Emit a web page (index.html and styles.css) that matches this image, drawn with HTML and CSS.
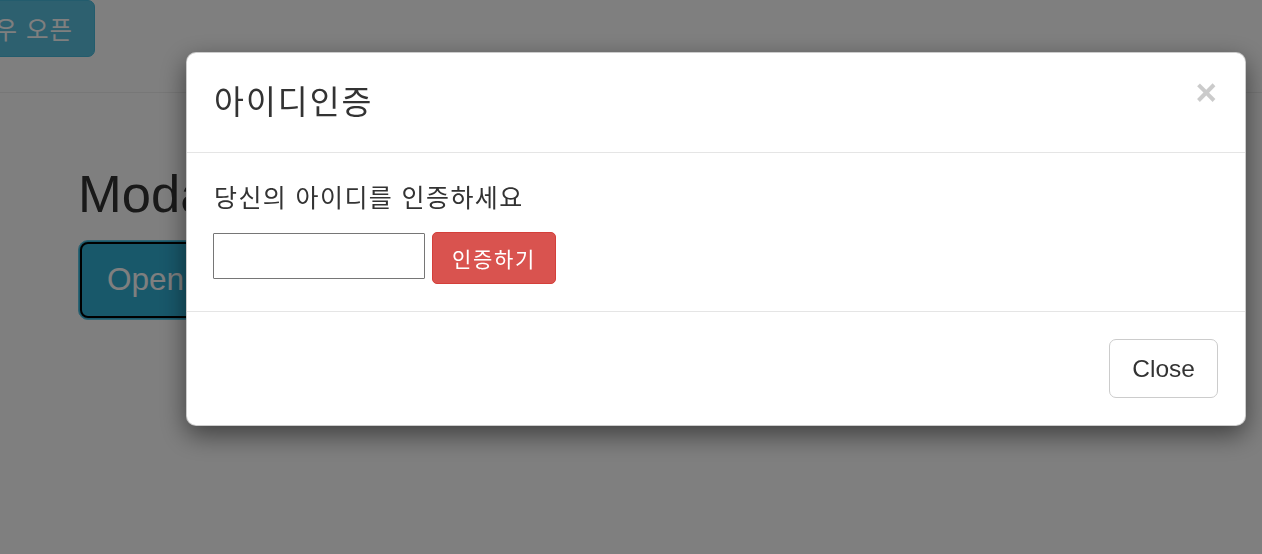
FILE: index.html
```html
<!DOCTYPE html>
<html lang="ko">
<head>
<meta charset="utf-8">
<title>Modal Example</title>
<link rel="stylesheet" href="styles.css">
</head>
<body>
<div class="topbar">
  <div class="topbar-inner">
    <button class="btn btn-info top-btn" type="button">새 윈도우 오픈</button>
  </div>
</div>
<div class="container">
  <h2 class="page-title">Modal Example</h2>
  <button class="btn btn-info btn-lg open-btn" type="button">Open Modal</button>
</div>

<div class="backdrop"></div>

<div class="modal" role="dialog">
  <div class="modal-header">
    <h4 class="modal-title">아이디인증</h4>
    <button class="close" type="button">&times;</button>
  </div>
  <div class="modal-body">
    <p class="modal-text">당신의 아이디를 인증하세요</p>
    <div class="form-row">
      <input class="id-input" type="text">
      <button class="btn btn-danger btn-sm" type="button">인증하기</button>
    </div>
  </div>
  <div class="modal-footer">
    <button class="btn btn-default close-btn" type="button">Close</button>
  </div>
</div>
</body>
</html>
```

FILE: styles.css
```css
* { box-sizing: border-box; }

html, body {
  margin: 0;
  padding: 0;
}

body {
  background: #fff;
  color: #333;
  font-family: "Liberation Sans", "Noto Sans CJK KR", sans-serif;
  overflow: hidden;
  height: 554px;
}

.btn {
  font-family: "Liberation Sans", "Noto Sans CJK KR", sans-serif;
  cursor: pointer;
  white-space: nowrap;
}

/* background page */
.topbar {
  height: 93px;
  border-bottom: 1px solid #eee;
}

.topbar-inner {
  width: 95px;
  display: flex;
  justify-content: flex-end;
}

.top-btn {
  flex-shrink: 0;
  height: 57px;
  padding: 0 21px;
  font-size: 24.5px;
  font-family: "Noto Sans CJK KR", sans-serif;
  letter-spacing: 1px;
  color: #fff;
  background: #5bc0de;
  border: 1px solid #46b8da;
  border-radius: 7px;
}

.container {
  padding-left: 78px;
  padding-top: 72px;
}

.page-title {
  margin: 0 0 17px;
  font-size: 52.5px;
  line-height: 1.1;
  font-weight: 500;
  color: #333;
}

.open-btn {
  height: 80px;
  padding: 0 28px;
  font-size: 31.5px;
  color: #fff;
  background: #31b0d5;
  border: 1px solid #5fc6e4;
  border-radius: 10px;
  outline: 2px solid #000;
  outline-offset: -4px;
}

/* backdrop */
.backdrop {
  position: fixed;
  inset: 0;
  background: rgba(0, 0, 0, 0.5);
}

/* modal */
.modal {
  position: fixed;
  left: 186px;
  top: 52px;
  width: 1060px;
  background: #fff;
  border: 1px solid rgba(0, 0, 0, 0.2);
  border-radius: 10px;
  box-shadow: 0 9px 26px rgba(0, 0, 0, 0.5);
  font-family: "Noto Sans CJK KR", sans-serif;
}

.modal-header {
  display: flex;
  align-items: flex-start;
  justify-content: space-between;
  padding: 24px 26px 30px 27px;
  border-bottom: 1px solid #e5e5e5;
}

.modal-title {
  margin: 0;
  font-size: 32.5px;
  line-height: 45px;
  font-weight: 400;
  letter-spacing: 2px;
  color: #333;
}

.close {
  margin-top: -2px;
  margin-right: 2px;
  padding: 0;
  background: none;
  border: 0;
  font-family: "Liberation Sans", sans-serif;
  font-size: 36.75px;
  line-height: 1;
  font-weight: 700;
  color: #000;
  opacity: 0.2;
  text-shadow: 0 1px 0 #fff;
  cursor: pointer;
}

.modal-body {
  padding: 26px 26px 27px 27px;
  border-bottom: 1px solid #e5e5e5;
}

.modal-text {
  margin: 0 0 18px;
  font-size: 25px;
  line-height: 35px;
  letter-spacing: 1.4px;
  color: #333;
}

.form-row {
  display: flex;
  align-items: flex-start;
  gap: 7px;
}

.id-input {
  width: 212px;
  height: 46px;
  margin-top: 1px;
  margin-left: -1px;
  border: 1px solid #767676;
  border-radius: 1px;
  font-size: 23px;
  padding: 2px 4px;
}

.btn-danger {
  height: 52px;
  padding: 0 19px;
  font-family: "Noto Sans CJK KR", sans-serif;
  font-size: 21px;
  letter-spacing: 1.7px;
  color: #fff;
  background: #d9534f;
  border: 1px solid #d43f3a;
  border-radius: 5px;
}

.modal-footer {
  display: flex;
  justify-content: flex-end;
  padding: 27px 27px 27px 26px;
}

.close-btn {
  height: 59px;
  padding: 0 22px;
  font-size: 24.5px;
  color: #333;
  background: #fff;
  border: 1px solid #ccc;
  border-radius: 7px;
}
```
